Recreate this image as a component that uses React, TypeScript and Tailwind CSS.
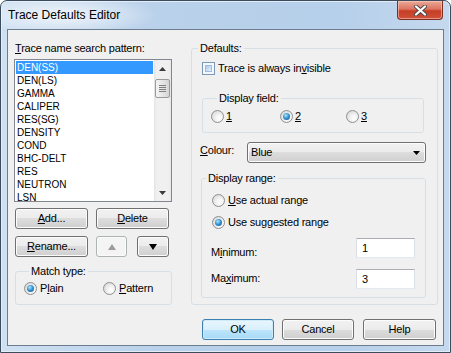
import React from "react";

function Radio({ checked, children, gap }: { checked?: boolean; children: React.ReactNode; gap?: string }) {
  return (
    <div className="flex items-center h-[15px]">
      <span className="flex items-center justify-center w-[13px] h-[13px] shrink-0 rounded-full border border-[#8e8f8f] bg-[radial-gradient(circle_at_65%_65%,#ffffff_0%,#f3f3f3_35%,#cfcfcf_100%)]">
        {checked && (
          <span className="w-[7px] h-[7px] rounded-full bg-[radial-gradient(circle_at_40%_35%,#b2e8fd_0%,#3a95d3_45%,#0e4f8c_100%)]" />
        )}
      </span>
      <span className={gap ?? "ml-[3px]"}>{children}</span>
    </div>
  );
}

function Btn({
  className,
  children,
  primary,
  disabled,
}: {
  className?: string;
  children: React.ReactNode;
  primary?: boolean;
  disabled?: boolean;
}) {
  const base = "flex items-center justify-center h-[21px] rounded-[3px] border leading-[15px] ";
  const look = primary
    ? "border-[#3c7fb1] bg-[linear-gradient(to_bottom,#eaf6fd_0%,#d9f0fc_50%,#bee6fd_50%,#a7d9f5_100%)] shadow-[inset_0_0_0_1px_#cdebfb]"
    : disabled
    ? "border-[#adb2b5] bg-[#f4f4f4] shadow-[inset_0_0_0_1px_#fbfbfb]"
    : "border-[#707070] bg-[linear-gradient(to_bottom,#f2f2f2_0%,#ebebeb_50%,#dddddd_50%,#cfcfcf_100%)] shadow-[inset_0_0_0_1px_#fcfcfc]";
  return <div className={base + look + " " + (className ?? "")}>{children}</div>;
}

const items = [
  "DEN(SS)",
  "DEN(LS)",
  "GAMMA",
  "CALIPER",
  "RES(SG)",
  "DENSITY",
  "COND",
  "BHC-DELT",
  "RES",
  "NEUTRON",
  "LSN",
];

export default function App() {
  return (
    <div className="w-[451px] h-[353px] bg-white [font-family:'Liberation_Sans',Arial,sans-serif] text-black">
      <div className="flex flex-col w-[451px] h-[353px] rounded-t-[7px] border border-[#3d4c5c] bg-[linear-gradient(to_right,#cfe0f2,#b9d1ea_35%,#b6cfea_75%,#c5d9ee)] shadow-[inset_0_0_0_1px_#e3edf8] overflow-hidden">
        {/* title bar */}
        <div className="flex h-[28px] shrink-0 bg-[radial-gradient(ellipse_95px_20px_at_62px_14px,rgba(255,255,255,0.75),rgba(255,255,255,0))]">
          <span className="ml-[7px] mt-[7px] h-[14px] leading-[14px] text-[12px]">Trace Defaults Editor</span>
          <div className="ml-auto mr-[7px] w-[46px] h-[19px] flex items-center justify-center rounded-b-[4px] border border-t-0 border-[#7c2e21] bg-[linear-gradient(to_bottom,#eba999_0%,#dc7560_45%,#c63d25_55%,#d0513a_100%)] shadow-[inset_0_0_0_1px_rgba(255,210,200,0.55)]">
            <svg width="13" height="11" viewBox="0 0 13 11">
              <path d="M2 1.5 L11 9.5 M11 1.5 L2 9.5" stroke="#4a4a4a" strokeWidth="4" strokeLinecap="round" />
              <path d="M2 1.5 L11 9.5 M11 1.5 L2 9.5" stroke="#ffffff" strokeWidth="2.2" strokeLinecap="round" />
            </svg>
          </div>
        </div>

        {/* client area */}
        <div className="mx-[6px] h-[317px] shrink-0 flex border border-[#6c7d8f] bg-[#f0f0f0] text-[11px] tracking-[-0.2px]">
          {/* left column */}
          <div className="ml-[6px] w-[158px] flex flex-col">
            <div className="mt-[11px] ml-[1px] h-[15px] leading-[15px]">
              <span className="underline">T</span>race name search pattern:
            </div>
            <div className="mt-[3px] flex w-[158px] h-[143px] border border-[#828790] bg-white">
              <div className="flex-1 pt-[1px] px-[1px] overflow-hidden">
                {items.map((t, i) => (
                  <div
                    key={t}
                    className={
                      i === 0
                        ? "h-[13px] leading-[13px] pl-[1px] text-[10px] tracking-normal bg-[#3399ff] text-white"
                        : "h-[13px] leading-[13px] pl-[1px] text-[10px] tracking-normal"
                    }
                  >
                    {t}
                  </div>
                ))}
              </div>
              <div className="w-[17px] flex flex-col bg-[linear-gradient(to_right,#e3e3e3_0%,#f0f0f0_15%,#f0f0f0_85%,#e6e6e6_100%)]">
                <div className="h-[17px] flex items-center justify-center">
                  <svg width="7" height="4" viewBox="0 0 7 4">
                    <path d="M0 4 L3.5 0 L7 4 Z" fill="#3b3b3b" />
                  </svg>
                </div>
                <div className="mt-[2px] mx-[1px] h-[19px] rounded-[2px] border border-[#9a9a9a] bg-[linear-gradient(to_right,#f4f4f4,#e6e6e6_50%,#d5d5d5)] flex flex-col items-center justify-center gap-[1px]">
                  <div className="w-[7px] h-[1px] bg-[#808080]" />
                  <div className="w-[7px] h-[1px] bg-[#808080]" />
                  <div className="w-[7px] h-[1px] bg-[#808080]" />
                  <div className="w-[7px] h-[1px] bg-[#808080]" />
                </div>
                <div className="mt-auto h-[17px] flex items-center justify-center">
                  <svg width="7" height="4" viewBox="0 0 7 4">
                    <path d="M0 0 L3.5 4 L7 0 Z" fill="#3b3b3b" />
                  </svg>
                </div>
              </div>
            </div>

            <div className="mt-[6px] ml-[1px] flex">
              <Btn className="w-[73px]">
                <span>
                  <span className="underline">A</span>dd...
                </span>
              </Btn>
              <Btn className="ml-[8px] w-[73px]">
                <span>
                  <span className="underline">D</span>elete
                </span>
              </Btn>
            </div>
            <div className="mt-[7px] ml-[1px] flex">
              <Btn className="w-[73px]">
                <span>
                  <span className="underline">R</span>ename...
                </span>
              </Btn>
              <Btn className="ml-[8px] w-[31px]" disabled>
                <svg width="8" height="6" viewBox="0 0 8 6">
                  <path d="M0 6 L4 0 L8 6 Z" fill="#9d9d9d" />
                </svg>
              </Btn>
              <Btn className="ml-[10px] w-[32px]">
                <svg width="8" height="6" viewBox="0 0 8 6">
                  <path d="M0 0 L4 6 L8 0 Z" fill="#000000" />
                </svg>
              </Btn>
            </div>

            <fieldset className="mt-[7px] ml-[1px] w-[157px] border border-[#d5dfe5] rounded-[3px] pt-[2px] pb-[8px] pl-[8px]">
              <legend className="ml-[5px] px-[2px] leading-[15px]">Match type:</legend>
              <div className="flex">
                <div className="w-[79px]">
                  <Radio checked>
                    P<span className="underline">l</span>ain
                  </Radio>
                </div>
                <Radio>
                  <span className="underline">P</span>attern
                </Radio>
              </div>
            </fieldset>
          </div>

          {/* right column */}
          <div className="ml-[19px] w-[247px] flex flex-col">
            <fieldset className="mt-[11px] w-[247px] border border-[#d5dfe5] rounded-[3px] pb-[6px]">
              <legend className="ml-[6px] px-[2px] leading-[15px]">Defaults:</legend>

              <div className="mt-[5px] ml-[10px] flex items-center h-[15px]">
                <span className="flex w-[13px] h-[13px] shrink-0 border border-[#7b98b8] bg-[#f4f8fc] p-[2px]">
                  <span className="flex-1 border border-[#9fbde0] bg-[linear-gradient(135deg,#aecbeb,#e3eefa)]" />
                </span>
                <span className="ml-[3px]">
                  Trace is always in<span className="underline">v</span>isible
                </span>
              </div>

              <fieldset className="mt-[15px] ml-[10px] w-[222px] border border-[#d5dfe5] rounded-[3px] pt-[3px] pb-[8px] pl-[8px]">
                <legend className="ml-[6px] px-[2px] leading-[15px]">Display field:</legend>
                <div className="flex">
                  <div className="w-[69px]">
                    <Radio gap="ml-[2px]">
                      <span className="underline">1</span>
                    </Radio>
                  </div>
                  <div className="w-[66px]">
                    <Radio checked gap="ml-[2px]">
                      <span className="underline">2</span>
                    </Radio>
                  </div>
                  <Radio gap="ml-[2px]">
                    <span className="underline">3</span>
                  </Radio>
                </div>
              </fieldset>

              <div className="mt-[9px] ml-[8px] flex items-start">
                <div className="mt-[1px] w-[47px] leading-[15px]">
                  <span className="underline">C</span>olour:
                </div>
                <div className="w-[179px] h-[21px] flex items-center rounded-[3px] border border-[#707070] bg-[linear-gradient(to_bottom,#f2f2f2_0%,#ebebeb_50%,#dddddd_50%,#cfcfcf_100%)] shadow-[inset_0_0_0_1px_#fcfcfc] pl-[3px] pr-[5px]">
                  <span className="leading-[15px]">Blue</span>
                  <svg className="ml-auto" width="7" height="4" viewBox="0 0 7 4">
                    <path d="M0 0 L3.5 4 L7 0 Z" fill="#000000" />
                  </svg>
                </div>
              </div>

              <fieldset className="mt-[8px] ml-[9px] w-[225px] border border-[#d5dfe5] rounded-[3px] pt-[7px] pb-[8px]">
                <legend className="ml-[4px] px-[2px] leading-[15px]">Display range:</legend>
                <div className="pl-[10px] flex flex-col gap-[7px]">
                  <Radio>
                    <span className="underline">U</span>se actual range
                  </Radio>
                  <Radio checked>
                    Use su<span className="underline">g</span>gested range
                  </Radio>
                </div>
                <div className="mt-[8px] pl-[9px] flex items-start">
                  <div className="mt-[7px] w-[145px] leading-[15px]">
                    M<span className="underline">i</span>nimum:
                  </div>
                  <div className="w-[59px] h-[20px] flex items-center pl-[5px] border border-[#abadb3] border-l-[#dbdfe6] border-r-[#dbdfe6] border-b-[#e3e9ef] bg-white leading-[15px]">
                    1
                  </div>
                </div>
                <div className="mt-[9px] pl-[9px] flex items-start">
                  <div className="mt-[2px] w-[145px] leading-[15px]">
                    Ma<span className="underline">x</span>imum:
                  </div>
                  <div className="w-[59px] h-[20px] flex items-center pl-[5px] border border-[#abadb3] border-l-[#dbdfe6] border-r-[#dbdfe6] border-b-[#e3e9ef] bg-white leading-[15px]">
                    3
                  </div>
                </div>
              </fieldset>
            </fieldset>

            <div className="mt-[14px] flex">
              <Btn primary className="ml-[11px] w-[72px]">
                OK
              </Btn>
              <Btn className="ml-[8px] w-[72px]">Cancel</Btn>
              <Btn className="ml-[9px] w-[73px]">Help</Btn>
            </div>
          </div>
        </div>
      </div>
    </div>
  );
}
